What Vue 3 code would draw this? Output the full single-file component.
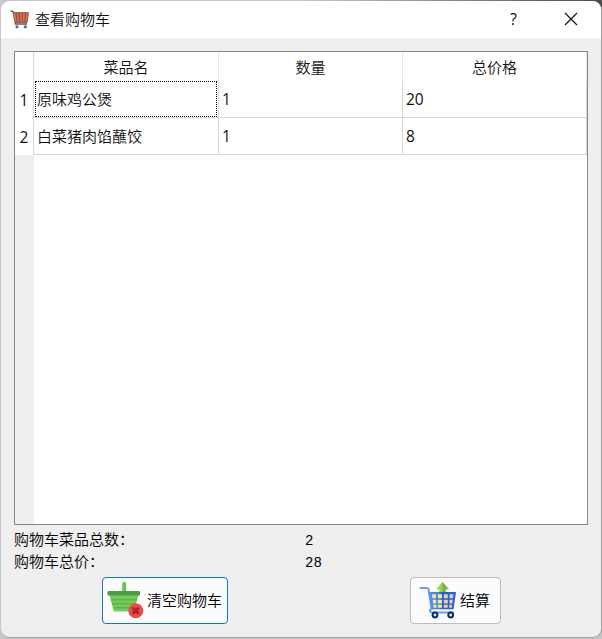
<script setup>
const rows = [
  { name: '原味鸡公煲', count: 1, price: 20 },
  { name: '白菜猪肉馅蘸饺', count: 1, price: 8 },
]
const totalCount = rows.reduce((sum, r) => sum + r.count, 0)
const totalPrice = rows.reduce((sum, r) => sum + r.price, 0)
</script>

<template>
  <div class="desktop">
    <div class="window">
      <header class="titlebar">
        <svg class="app-icon" viewBox="0 0 20 20">
          <path d="M0.5 0.8 L3 1.6 L5.5 14 H17" fill="none" stroke="#55565c" stroke-width="1.3" />
          <path d="M3 2.4 H18.5 L17.2 12.5 H5 Z" fill="#d96d50" />
          <path d="M3 2.6 H18.5 M6.2 3 L7 12 M9.3 3 L9.5 12 M12.4 3 L12.2 12 M15.5 3 L14.7 12 M5 12.5 H17.2 L18.5 3" fill="none" stroke="#713c37" stroke-width="0.7" />
          <circle cx="7" cy="16.8" r="1.6" fill="#666a70" />
          <circle cx="15.3" cy="16.8" r="1.6" fill="#666a70" />
        </svg>
        <h1 class="title">查看购物车</h1>
        <button class="caption help">?</button>
        <button class="caption close">
          <svg viewBox="0 0 14 14"><path d="M1 1 L13 13 M13 1 L1 13" fill="none" stroke="#111" stroke-width="1.2" /></svg>
        </button>
      </header>

      <main class="content">
        <div class="table">
          <div class="row head">
            <span class="index"></span>
            <span class="cell">菜品名</span>
            <span class="cell">数量</span>
            <span class="cell">总价格</span>
          </div>
          <div v-for="(row, i) in rows" :key="row.name" class="row">
            <span class="index digits">{{ i + 1 }}</span>
            <span class="cell" :class="{ focused: i === 0 }">{{ row.name }}</span>
            <span class="cell digits">{{ row.count }}</span>
            <span class="cell digits">{{ row.price }}</span>
          </div>
          <div class="blank"></div>
        </div>

        <div class="summary">
          <span>购物车菜品总数：</span><span class="num">{{ totalCount }}</span>
          <span>购物车总价：</span><span class="num">{{ totalPrice }}</span>
        </div>

        <div class="actions">
          <button class="btn clear">
            <svg class="basket" viewBox="0 0 38 38">
              <rect x="15.2" y="0" width="4" height="12" rx="1.8" fill="#6cc05a" />
              <path d="M2.5 13 H31.5 L27 29.5 H6.8 Z" fill="#74cb5c" />
              <path d="M4 17.8 H30 M5 21.8 H29 M6 25.8 H27.5" stroke="#52a849" stroke-width="1" />
              <rect x="0.5" y="9" width="32.5" height="4.6" rx="1.2" fill="#4a9c40" />
              <circle cx="28.8" cy="28.8" r="7.5" fill="#ee4b48" />
              <path d="M25.8 25.8 L31.8 31.8 M31.8 25.8 L25.8 31.8" stroke="#a9242c" stroke-width="2.8" />
            </svg>
            <span>清空购物车</span>
          </button>
          <button class="btn checkout">
            <svg class="cart" viewBox="0 0 38 38">
              <defs>
                <linearGradient id="cartBlue" x1="0" x2="1">
                  <stop offset="0" stop-color="#5791f5" />
                  <stop offset="0.45" stop-color="#3978e5" />
                  <stop offset="0.45" stop-color="#235fcf" />
                  <stop offset="1" stop-color="#1d64dc" />
                </linearGradient>
              </defs>
              <path d="M23.5 0 L29.8 7.3 H26.8 V12 H20.2 V7.3 H17.2 Z" fill="#9bd04a" />
              <path d="M23.5 0 L29.8 7.3 H26.8 V12 H23.5 Z" fill="#73b63d" />
              <path d="M1.5 6 H7.5 Q9.3 6 9.7 8 L12.6 27 Q10.5 28 11 29.3 Q11.4 30.5 13.5 30.5 H34" fill="none" stroke="#6b9af3" stroke-width="2" stroke-linecap="round" />
              <path d="M9.8 10 H37 L34.5 27.3 H12.5 Z" fill="url(#cartBlue)" />
              <g fill="#f5e69c">
                <path d="M13 12.2h4v4h-3.5zM18.8 12.2h4.2v4h-4.2zM13.6 17.8h3.6v3.7h-3.1zM18.8 17.8h4.2v3.7h-4.2zM14.2 22.8h3.2v3h-2.8zM18.8 22.8h4.2v3h-4.2z" />
              </g>
              <g fill="#f0cba4">
                <path d="M24.8 12.2h4v4h-4zM30.5 12.2h3.9l-.5 4h-3.4zM24.8 17.8h4v3.7h-4zM30.4 17.8h3.4l-.5 3.7h-2.9zM24.8 22.8h3.9v3h-3.9zM30.3 22.8h2.9l-.4 3h-2.5z" />
              </g>
              <circle cx="16" cy="33" r="2.4" fill="#d2e5ff" stroke="#112b65" stroke-width="2" />
              <circle cx="31.7" cy="33" r="2.4" fill="#d2e5ff" stroke="#112b65" stroke-width="2" />
            </svg>
            <span>结算</span>
          </button>
        </div>
      </main>
    </div>
  </div>
</template>

<style>
body {
  margin: 0;
}
</style>

<style scoped>
.desktop {
  box-sizing: border-box;
  width: 602px;
  height: 639px;
  padding: 1px 0 1px 1px;
  background:
    linear-gradient(90deg, transparent 50%, #4a4a4c) top / 100% 60px no-repeat,
    #c6c8c9;
  overflow: hidden;
  font-family: "Noto Sans CJK SC", sans-serif;
  font-size: 15px;
  font-weight: 350;
  color: #111;
}
.window {
  box-sizing: border-box;
  width: 601px;
  height: 637px;
  border: 1px solid #a0a0a0;
  border-width: 0 1px 1px 0;
  border-radius: 9px;
  background: #efefef;
  overflow: hidden;
}
.titlebar {
  display: flex;
  align-items: center;
  height: 37px;
  padding-left: 9px;
  background: #fff;
}
.app-icon {
  width: 20px;
  height: 20px;
}
.title {
  flex: 1;
  margin: 0 0 0 5px;
  padding-bottom: 2px;
  font: inherit;
  line-height: 22px;
}
.caption {
  display: flex;
  align-items: center;
  justify-content: center;
  box-sizing: border-box;
  width: 57px;
  height: 37px;
  padding: 0 0 2px;
  border: 0;
  background: none;
  color: #111;
  font: 16px "Open Sans", sans-serif;
}
.close {
  margin-right: 2px;
}
.close svg {
  width: 14px;
  height: 14px;
}
.content {
  padding: 13px 12px 0 13px;
}
.table {
  display: flex;
  flex-direction: column;
  box-sizing: border-box;
  width: 574px;
  height: 474px;
  border: 1px solid #858585;
  background: #fff;
}
.row {
  display: grid;
  grid-template-columns: 19px 185px 184px 184px;
  height: 37px;
}
.row.head {
  height: 29px;
}
.index,
.cell {
  display: flex;
  align-items: center;
  box-sizing: border-box;
  padding-bottom: 1px;
  border-right: 1px solid #d8d8d8;
}
.index {
  justify-content: center;
}
.cell {
  padding-left: 3px;
  border-bottom: 1px solid #d8d8d8;
}
.digits {
  padding-bottom: 0;
  font-family: "Open Sans", sans-serif;
  font-size: 15.5px;
  font-weight: 400;
}
.head .cell {
  justify-content: center;
  padding: 0 0 1px;
  border-bottom: 0;
  border-right-color: #e8e8e8;
}
.cell.focused {
  position: relative;
}
.cell.focused::after {
  content: "";
  position: absolute;
  inset: 0 1px 0 1px;
  border: 1px dotted #000;
}
.blank {
  flex: 1;
  width: 19px;
  background: #efefef;
}
.summary {
  display: grid;
  grid-template-columns: 291px 1fr;
  grid-auto-rows: 22px;
  align-items: center;
  padding-top: 3px;
  line-height: 22px;
  color: #000;
}
.num {
  padding-top: 4px;
  font-family: "Liberation Mono", monospace;
  font-size: 14px;
}
.actions {
  display: flex;
  justify-content: space-between;
  padding: 5px 88px 0 88px;
}
.btn {
  display: flex;
  align-items: center;
  box-sizing: border-box;
  height: 47px;
  padding: 0;
  border: 1px solid #bdbdbd;
  border-radius: 4px;
  background: #fcfcfc;
  color: #000;
  font: inherit;
  white-space: nowrap;
}
.btn span {
  padding-bottom: 2px;
}
.clear {
  width: 126px;
  padding-left: 4px;
  border-color: #0f78c0;
}
.checkout {
  width: 91px;
  padding-left: 8px;
}
.btn svg {
  flex: none;
  width: 38px;
  height: 38px;
  margin-right: 3px;
}
.clear svg {
  margin-right: 2px;
}
</style>
